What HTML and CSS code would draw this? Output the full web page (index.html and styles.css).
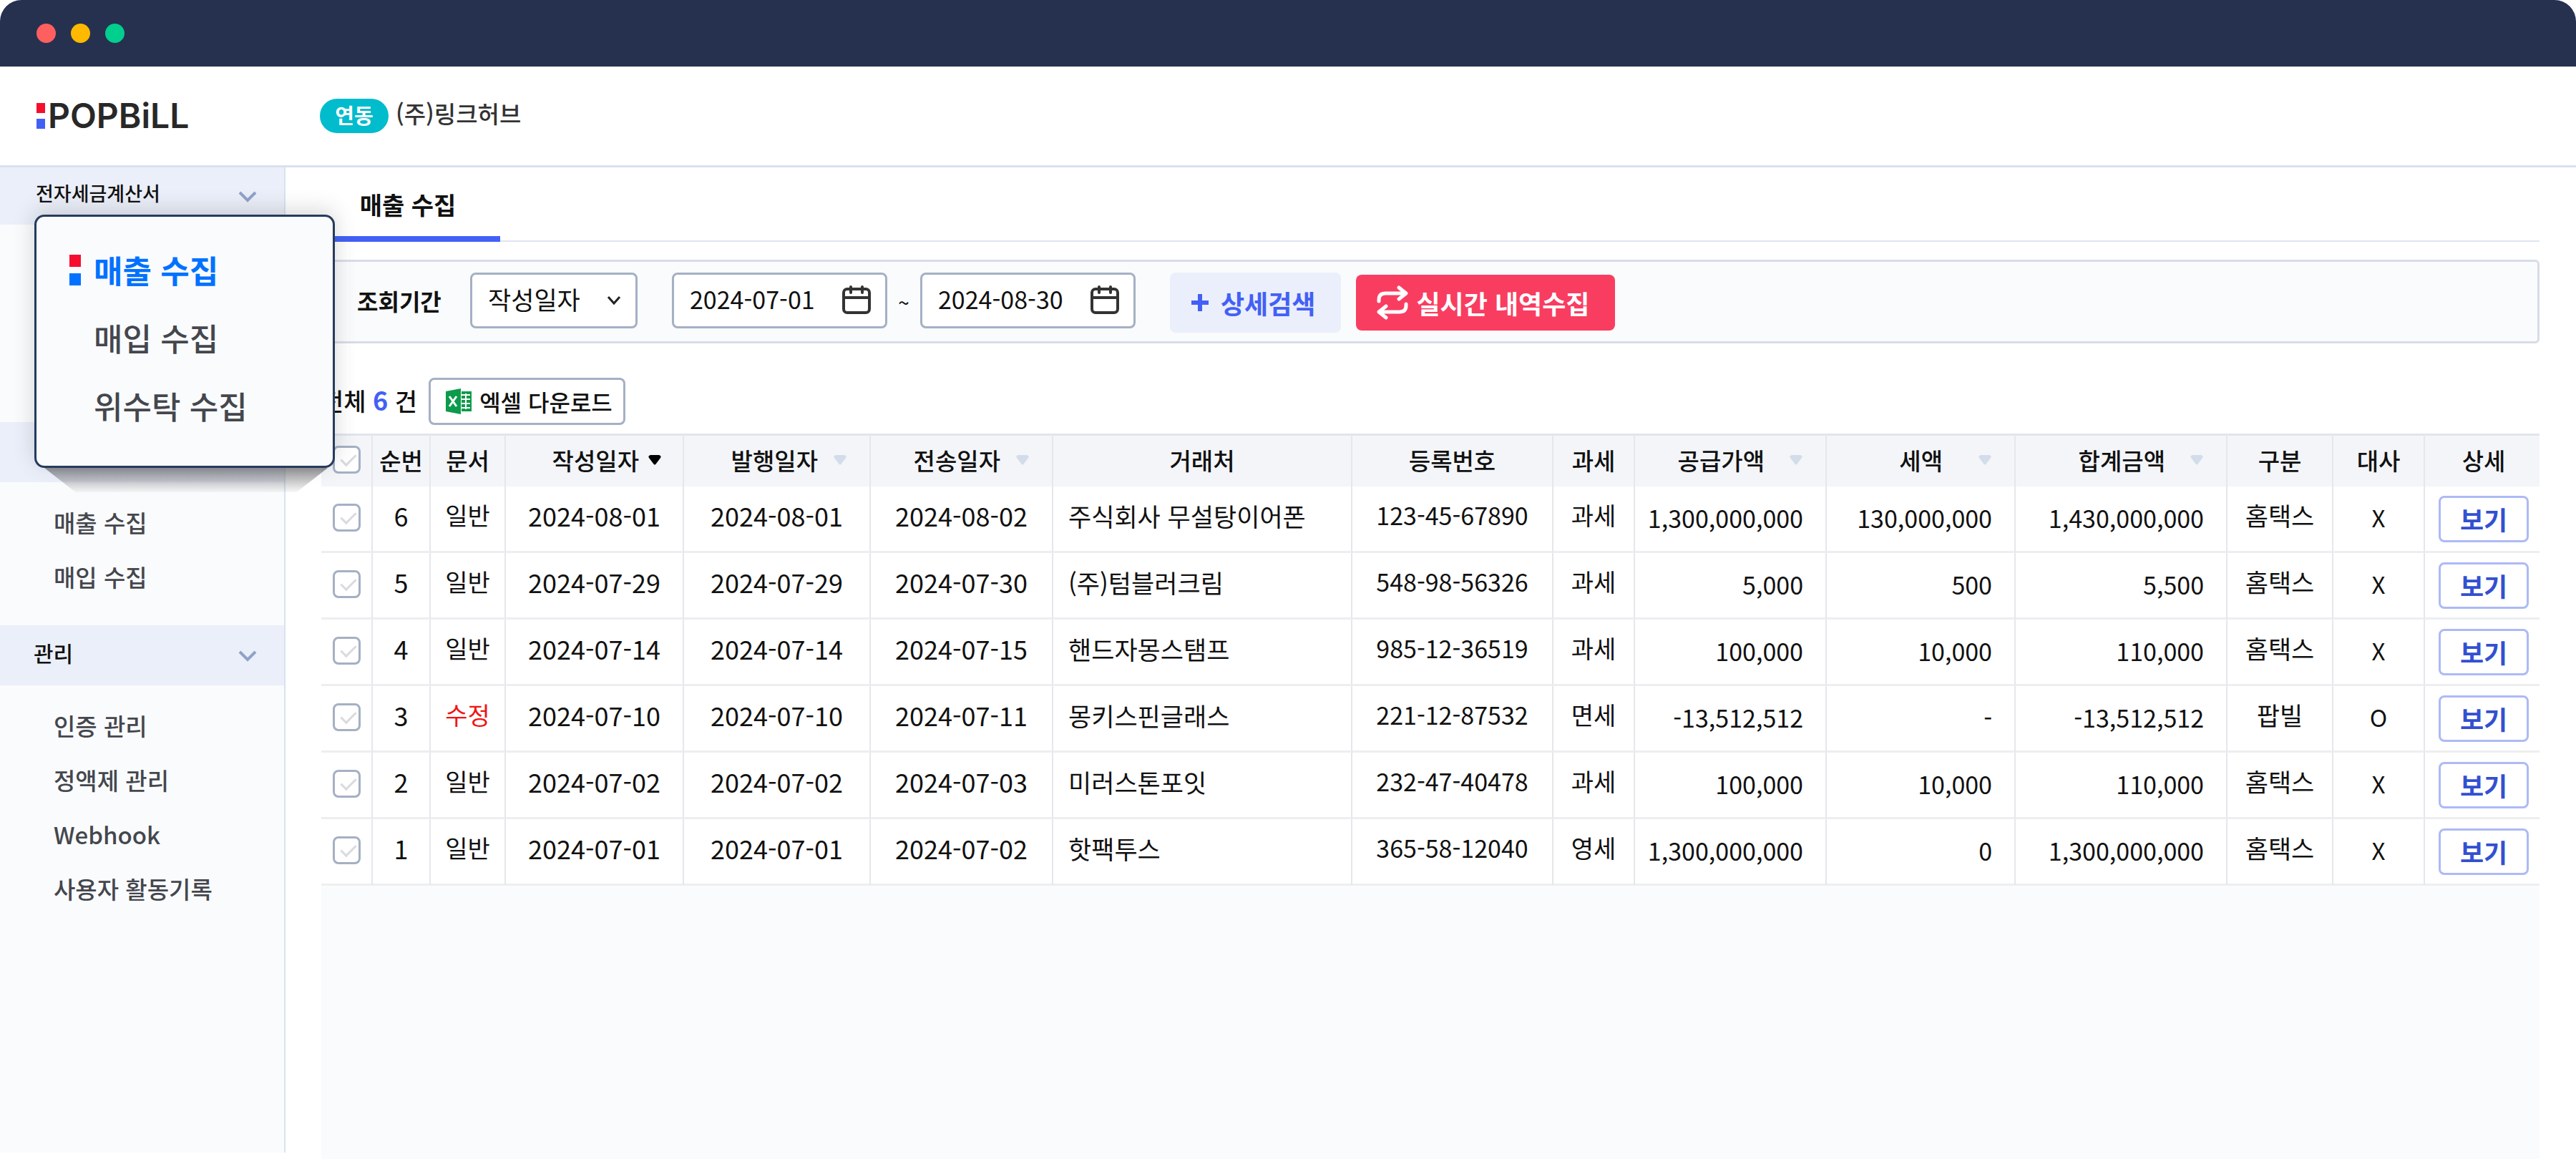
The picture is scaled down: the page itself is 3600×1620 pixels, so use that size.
FILE: index.html
```html
<!DOCTYPE html>
<html lang="ko">
<head>
	<meta charset="UTF-8">
	<title>POPBiLL - 매출 수집</title>
	<link rel="stylesheet" href="styles.css">
</head>
<body>
	<div class="window">
		<div class="titlebar">
			<span class="dot red"></span>
			<span class="dot yellow"></span>
			<span class="dot green"></span>
		</div>
		<header class="header">
			<a href="#" class="logo"><span class="mark"></span>POPBiLL</a>
			<span class="badge">연동</span>
			<span class="company">(주)링크허브</span>
		</header>
		<div class="body">
			<aside class="sidebar">
				<section class="nav-group">
					<h2 class="nav-title">전자세금계산서
						<svg class="arrow" viewBox="0 0 26 16"><path d="M2 2l11 11L24 2"/></svg>
					</h2>
					<ul class="nav-list nav-empty"></ul>
				</section>
				<section class="nav-group">
					<h2 class="nav-title"></h2>
					<ul class="nav-list">
						<li><a href="#">매출 수집</a></li>
						<li><a href="#">매입 수집</a></li>
					</ul>
				</section>
				<section class="nav-group">
					<h2 class="nav-title">관리
						<svg class="arrow" viewBox="0 0 26 16"><path d="M2 2l11 11L24 2"/></svg>
					</h2>
					<ul class="nav-list">
						<li><a href="#">인증 관리</a></li>
						<li><a href="#">정액제 관리</a></li>
						<li><a href="#">Webhook</a></li>
						<li><a href="#">사용자 활동기록</a></li>
					</ul>
				</section>
				<!-- 펼침 메뉴 -->
				<div class="popup">
					<ul class="popup-list">
						<li><a href="#" class="active"><span class="mark"></span>매출 수집</a></li>
						<li><a href="#">매입 수집</a></li>
						<li><a href="#">위수탁 수집</a></li>
					</ul>
				</div>
			</aside>
			<main class="main">
				<nav class="tabs"><a href="#" class="tab">매출 수집</a></nav>
				<form class="filter">
					<label class="filter-label" for="dateType">조회기간</label>
					<div class="field select-field">
						<select id="dateType"><option>작성일자</option></select>
						<svg class="caret" viewBox="0 0 20 14"><path d="M2 2l8 9 8-9"/></svg>
					</div>
					<div class="range">
						<label class="field date-field">
							<input type="text" value="2024-07-01" aria-label="시작일">
							<svg class="calendar" viewBox="0 0 40 40"><rect x="2" y="5" width="36" height="33" rx="5"/><path d="M2 17h36M12 2v8M28 2v8"/></svg>
						</label>
						<span class="tilde">~</span>
						<label class="field date-field">
							<input type="text" value="2024-08-30" aria-label="종료일">
							<svg class="calendar" viewBox="0 0 40 40"><rect x="2" y="5" width="36" height="33" rx="5"/><path d="M2 17h36M12 2v8M28 2v8"/></svg>
						</label>
					</div>
					<div class="actions">
						<button type="button" class="btn-detail">
							<svg class="plus" viewBox="0 0 24 24"><path d="M12 0v24M0 12h24"/></svg>상세검색
						</button>
						<button type="button" class="btn-collect">
							<svg class="repeat" viewBox="0 0 44 48"><path d="M3 22v-2q0-9 9-9h27M31 3l10 8-10 8M41 26v2q0 9-9 9H5M13 29L3 37l10 8"/></svg>실시간 내역수집
						</button>
					</div>
				</form>
				<div class="toolbar">
					<p class="total">전체 <b>6</b> 건</p>
					<button type="button" class="btn-excel">
						<svg class="excel" viewBox="0 0 36 36">
							<path fill="#0b9b4a" d="M0 4L21 0v36L0 32z"/>
							<path fill="#0b9b4a" d="M22 4h14v28H22z"/>
							<path stroke="#fff" stroke-width="2" d="M22 9h12M22 15h12M22 21h12M22 27h12M28 7v22"/>
							<path stroke="#fff" stroke-width="3" d="M5 11l10 14M15 11L5 25"/>
						</svg>엑셀 다운로드
					</button>
				</div>
				<div class="table-wrap">
					<table class="list">
						<colgroup>
							<col class="w-check"><col class="w-no"><col class="w-doc"><col class="w-date1"><col class="w-date2"><col class="w-date3">
							<col><col class="w-reg"><col class="w-tax"><col class="w-supply"><col class="w-vat"><col class="w-sum">
							<col class="w-kind"><col class="w-match"><col class="w-view">
						</colgroup>
						<thead>
							<tr>
								<th><input type="checkbox" class="check" aria-label="전체 선택"></th>
								<th>순번</th>
								<th>문서</th>
								<th><div class="sort on">작성일자<svg viewBox="0 0 18 14"><path d="M3 0h12q4 1 2 4l-6 8q-2 3-4 0L1 4Q-1 1 3 0z"/></svg></div></th>
								<th><div class="sort">발행일자<svg viewBox="0 0 18 14"><path d="M3 0h12q4 1 2 4l-6 8q-2 3-4 0L1 4Q-1 1 3 0z"/></svg></div></th>
								<th><div class="sort">전송일자<svg viewBox="0 0 18 14"><path d="M3 0h12q4 1 2 4l-6 8q-2 3-4 0L1 4Q-1 1 3 0z"/></svg></div></th>
								<th>거래처</th>
								<th>등록번호</th>
								<th>과세</th>
								<th><div class="sort wide">공급가액<svg viewBox="0 0 18 14"><path d="M3 0h12q4 1 2 4l-6 8q-2 3-4 0L1 4Q-1 1 3 0z"/></svg></div></th>
								<th><div class="sort wider">세액<svg viewBox="0 0 18 14"><path d="M3 0h12q4 1 2 4l-6 8q-2 3-4 0L1 4Q-1 1 3 0z"/></svg></div></th>
								<th><div class="sort wide">합계금액<svg viewBox="0 0 18 14"><path d="M3 0h12q4 1 2 4l-6 8q-2 3-4 0L1 4Q-1 1 3 0z"/></svg></div></th>
								<th>구분</th>
								<th>대사</th>
								<th>상세</th>
							</tr>
						</thead>
						<tbody>
							<tr>
								<td><input type="checkbox" class="check" aria-label="6번 선택"></td>
								<td class="date">6</td>
								<td>일반</td>
								<td class="date">2024-08-01</td>
								<td class="date">2024-08-01</td>
								<td class="date">2024-08-02</td>
								<td class="name">주식회사 무설탕이어폰</td>
								<td>123-45-67890</td>
								<td>과세</td>
								<td class="num">1,300,000,000</td>
								<td class="num">130,000,000</td>
								<td class="num">1,430,000,000</td>
								<td class="kind">홈택스</td>
								<td class="match">X</td>
								<td><button type="button" class="btn-view">보기</button></td>
							</tr>
							<tr>
								<td><input type="checkbox" class="check" aria-label="5번 선택"></td>
								<td class="date">5</td>
								<td>일반</td>
								<td class="date">2024-07-29</td>
								<td class="date">2024-07-29</td>
								<td class="date">2024-07-30</td>
								<td class="name">(주)텀블러크림</td>
								<td>548-98-56326</td>
								<td>과세</td>
								<td class="num">5,000</td>
								<td class="num">500</td>
								<td class="num">5,500</td>
								<td class="kind">홈택스</td>
								<td class="match">X</td>
								<td><button type="button" class="btn-view">보기</button></td>
							</tr>
							<tr>
								<td><input type="checkbox" class="check" aria-label="4번 선택"></td>
								<td class="date">4</td>
								<td>일반</td>
								<td class="date">2024-07-14</td>
								<td class="date">2024-07-14</td>
								<td class="date">2024-07-15</td>
								<td class="name">핸드자몽스탬프</td>
								<td>985-12-36519</td>
								<td>과세</td>
								<td class="num">100,000</td>
								<td class="num">10,000</td>
								<td class="num">110,000</td>
								<td class="kind">홈택스</td>
								<td class="match">X</td>
								<td><button type="button" class="btn-view">보기</button></td>
							</tr>
							<tr>
								<td><input type="checkbox" class="check" aria-label="3번 선택"></td>
								<td class="date">3</td>
								<td class="modified">수정</td>
								<td class="date">2024-07-10</td>
								<td class="date">2024-07-10</td>
								<td class="date">2024-07-11</td>
								<td class="name">몽키스핀글래스</td>
								<td>221-12-87532</td>
								<td>면세</td>
								<td class="num">-13,512,512</td>
								<td class="num">-</td>
								<td class="num">-13,512,512</td>
								<td class="kind">팝빌</td>
								<td class="match">O</td>
								<td><button type="button" class="btn-view">보기</button></td>
							</tr>
							<tr>
								<td><input type="checkbox" class="check" aria-label="2번 선택"></td>
								<td class="date">2</td>
								<td>일반</td>
								<td class="date">2024-07-02</td>
								<td class="date">2024-07-02</td>
								<td class="date">2024-07-03</td>
								<td class="name">미러스톤포잇</td>
								<td>232-47-40478</td>
								<td>과세</td>
								<td class="num">100,000</td>
								<td class="num">10,000</td>
								<td class="num">110,000</td>
								<td class="kind">홈택스</td>
								<td class="match">X</td>
								<td><button type="button" class="btn-view">보기</button></td>
							</tr>
							<tr>
								<td><input type="checkbox" class="check" aria-label="1번 선택"></td>
								<td class="date">1</td>
								<td>일반</td>
								<td class="date">2024-07-01</td>
								<td class="date">2024-07-01</td>
								<td class="date">2024-07-02</td>
								<td class="name">핫팩투스</td>
								<td>365-58-12040</td>
								<td>영세</td>
								<td class="num">1,300,000,000</td>
								<td class="num">0</td>
								<td class="num">1,300,000,000</td>
								<td class="kind">홈택스</td>
								<td class="match">X</td>
								<td><button type="button" class="btn-view">보기</button></td>
							</tr>
						</tbody>
					</table>
				</div>
			</main>
		</div>
	</div>
</body>
</html>
```

FILE: styles.css
```css
*{
	margin: 0;
	padding: 0;
	box-sizing: border-box;
}
body{
	background-color: #fff;
	color: #111;
	font-family: "Noto Sans CJK KR", sans-serif;
	font-size: 34px;
	line-height: 48px;
}
ul{
	list-style: none;
}
a{
	color: inherit;
	text-decoration: none;
}
button,input,select{
	font-family: inherit;
	font-size: inherit;
	line-height: inherit;
	color: inherit;
}
button{
	cursor: pointer;
}
svg{
	display: block;
	flex: none;
	fill: none;
}
.window{
	display: flex;
	flex-direction: column;
	min-height: 100vh;
}
/* 상단 */
.titlebar{
	display: flex;
	align-items: center;
	gap: 21px;
	height: 93px;
	padding-left: 51px;
	background-color: #26314f;
	border-radius: 30px 30px 0 0;
}
.dot{
	width: 27px;
	height: 27px;
	border-radius: 50%;
}
.red{
	background-color: #ff5f5f;
}
.yellow{
	background-color: #ffb900;
}
.green{
	background-color: #00cf8e;
}
.header{
	display: flex;
	align-items: center;
	height: 141px;
	padding-left: 51px;
	border-bottom: 3px solid #d8e0f0;
}
.logo{
	display: flex;
	align-items: center;
	gap: 4px;
	width: 396px;
	font-family: Inter, sans-serif;
	font-size: 48px;
	font-weight: 600;
	color: #282828;
}
.mark{
	display: flex;
	flex-direction: column;
	justify-content: space-between;
	width: 12px;
	height: 36px;
}
.mark::before,.mark::after{
	content: "";
	height: 40%;
	background-color: #f50f2d;
}
.mark::after{
	background-color: #4360f5;
}
.badge{
	width: 96px;
	margin-right: 10px;
	padding-bottom: 4px;
	border-radius: 24px;
	background-color: #00bccd;
	color: #fff;
	font-size: 29px;
	font-weight: 700;
	line-height: 44px;
	text-align: center;
}
.company{
	padding-bottom: 8px;
	font-size: 33px;
	font-weight: 500;
	color: #333;
}
.body{
	display: flex;
	flex: 1;
}
/* 왼쪽 메뉴 */
.sidebar{
	position: relative;
	flex: none;
	width: 399px;
	margin-bottom: 9px;
	background-color: #fafbfd;
	border-right: 2px solid #d8e2f2;
}
.nav-title{
	display: flex;
	align-items: center;
	justify-content: space-between;
	height: 84px;
	padding: 0 38px 8px 47px;
	background-color: #ebeff9;
	font-size: 30px;
	font-weight: 500;
}
.nav-group:first-child .nav-title{
	height: 80px;
	padding-left: 50px;
	font-size: 27px;
}
.arrow{
	width: 26px;
	height: 16px;
	margin-top: 10px;
	stroke: #8fa2c8;
	stroke-width: 4;
}
.nav-list{
	padding: 18px 0 30px 75px;
	font-size: 33px;
	font-weight: 500;
	line-height: 76px;
	color: #44474d;
}
.nav-empty{
	height: 276px;
}
.nav-list a{
	display: block;
}
.popup{
	position: absolute;
	top: 66px;
	left: 48px;
	z-index: 10;
	width: 420px;
}
.popup::before{
	content: "";
	position: absolute;
	left: 14px;
	right: 10px;
	top: 100%;
	height: 34px;
	background-image: linear-gradient(rgba(90,90,95,0.65), rgba(120,120,125,0.05));
	clip-path: polygon(0 0, 100% 0, 89% 100%, 11% 100%);
}
.popup-list{
	position: relative;
	padding: 27px 0 36px 80px;
	border: 3px solid #263b5e;
	border-radius: 14px;
	background-color: #fafbfd;
	box-shadow: 0 -6px 30px rgba(60,60,60,0.2);
	font-size: 44px;
	font-weight: 500;
	line-height: 95px;
	color: #44474d;
}
.popup-list a{
	display: flex;
	align-items: center;
}
.popup-list .active{
	color: #0072ff;
	font-weight: 700;
}
.popup .mark{
	width: 16px;
	height: 43px;
	margin-left: -34px;
	margin-right: 18px;
}
.popup .mark::after{
	background-color: #0072ff;
}
/* 본문 */
.main{
	display: flex;
	flex-direction: column;
	flex: 1;
	min-width: 0;
	padding: 0 51px 0 50px;
}
.tabs{
	display: flex;
	height: 104px;
	border-bottom: 2px solid #dfe5f3;
}
.tab{
	width: 250px;
	height: 104px;
	padding-right: 8px;
	border-bottom: 8px solid #4360f5;
	font-weight: 700;
	line-height: 104px;
	text-align: center;
}
.filter{
	display: flex;
	align-items: center;
	height: 117px;
	margin-top: 25px;
	padding: 0 0 3px 47px;
	border: 3px solid #d8dce6;
	border-radius: 6px;
	background-color: #f9fbfc;
}
.filter-label{
	width: 158px;
	font-size: 32px;
	font-weight: 700;
}
.field{
	display: flex;
	align-items: center;
	height: 78px;
	padding: 0 20px 4px 22px;
	border: 3px solid #a5b0c4;
	border-radius: 8px;
	background-color: #fff;
}
.field input,.field select{
	flex: 1;
	min-width: 0;
	border: 0;
	outline: 0;
	background: none;
	appearance: none;
}
.select-field{
	width: 234px;
	margin-right: 48px;
	font-size: 35px;
}
.caret{
	width: 20px;
	height: 14px;
	margin-top: 4px;
	stroke: #222;
	stroke-width: 3;
}
.range{
	display: flex;
	align-items: center;
	margin-right: 48px;
}
.date-field{
	width: 301px;
}
.calendar{
	width: 40px;
	height: 40px;
	margin-top: 2px;
	stroke: #333;
	stroke-width: 4;
	stroke-linecap: round;
}
.tilde{
	width: 46px;
	padding-top: 4px;
	font-size: 28px;
	text-align: center;
}
.actions{
	display: flex;
	align-items: center;
	gap: 21px;
	padding-top: 6px;
}
.btn-detail,.btn-collect{
	display: flex;
	align-items: center;
	border: 0;
	border-radius: 8px;
	font-size: 36px;
	font-weight: 700;
}
.btn-detail{
	gap: 17px;
	height: 84px;
	padding: 0 36px 0 30px;
	background-color: #eaeffb;
	color: #4360f5;
}
.plus{
	width: 24px;
	height: 24px;
	stroke: #4360f5;
	stroke-width: 6;
}
.btn-collect{
	gap: 11px;
	height: 78px;
	padding: 0 36px 0 29px;
	background-color: #f93d60;
	color: #fff;
}
.repeat{
	width: 44px;
	height: 48px;
	stroke: #fff;
	stroke-width: 5;
	stroke-linecap: round;
	stroke-linejoin: round;
}
.toolbar{
	display: flex;
	align-items: center;
	gap: 16px;
	margin-top: 48px;
	margin-bottom: 12px;
}
.total{
	padding-bottom: 4px;
	font-weight: 500;
}
.total b{
	font-size: 36px;
}
.total b{
	color: #4360f5;
}
.btn-excel{
	display: flex;
	align-items: center;
	gap: 11px;
	height: 66px;
	padding: 0 15px 0 21px;
	border: 3px solid #a5b0c4;
	border-radius: 8px;
	background-color: #fff;
	font-size: 32px;
	font-weight: 500;
}
.excel{
	width: 36px;
	height: 36px;
}
/* 목록 */
.table-wrap{
	flex: 1;
	background-color: #fafbfd;
}
.list{
	width: 100%;
	table-layout: fixed;
	border-collapse: separate;
	border-spacing: 0;
	background-color: #fff;
	text-align: center;
}
.w-check{ width: 72px; }
.w-no{ width: 81px; }
.w-doc{ width: 105px; }
.w-date1{ width: 249px; }
.w-date2{ width: 261px; }
.w-date3{ width: 255px; }
.w-reg{ width: 281px; }
.w-tax{ width: 114px; }
.w-supply{ width: 268px; }
.w-vat{ width: 264px; }
.w-sum{ width: 296px; }
.w-kind{ width: 148px; }
.w-match{ width: 128px; }
.w-view{ width: 160px; }
.list th{
	height: 74px;
	padding-bottom: 4px;
	border-top: 3px solid #e1e4eb;
	border-right: 2px solid #e5e7eb;
	background-color: #f3f5f9;
	font-size: 33px;
	font-weight: 500;
	white-space: nowrap;
}
.list td{
	height: 93px;
	padding-bottom: 10px;
	border-right: 2px solid #e5e7eb;
	border-bottom: 3px solid #edeef0;
	white-space: nowrap;
}
.list td:first-child{
	padding-bottom: 4px;
}
.list th:last-child,.list td:last-child{
	border-right: 0;
	padding-left: 4px;
}
.list td:last-child{
	padding-bottom: 0;
}
.list .date{
	font-size: 36px;
}
.list .name{
	padding-left: 21px;
	padding-bottom: 8px;
	font-size: 35px;
	text-align: left;
}
.list .num{
	padding-right: 31px;
	padding-bottom: 2px;
	text-align: right;
}
.list .kind{
	font-size: 35px;
}
.list .match{
	padding-bottom: 4px;
	font-size: 33px;
}
.list .modified{
	color: #f01414;
}
.sort{
	display: flex;
	align-items: center;
	justify-content: flex-end;
	gap: 22px;
	padding-right: 32px;
}
.sort.on{
	gap: 13px;
	padding-right: 30px;
}
.sort.wide{
	gap: 35px;
}
.sort.wider{
	gap: 50px;
}
.sort svg{
	width: 18px;
	height: 14px;
	fill: #d3dde9;
}
.sort.on svg{
	fill: #000;
}
.check{
	display: block;
	width: 39px;
	height: 39px;
	margin-left: 16px;
	border: 3px solid #a5b0c4;
	border-radius: 8px;
	background-color: #fff;
	appearance: none;
}
.check::before{
	content: "";
	display: block;
	width: 9px;
	height: 18px;
	margin: 4px 0 0 13px;
	border: solid #d9dbe0;
	border-width: 0 3px 3px 0;
	transform: rotate(45deg);
}
.btn-view{
	width: 126px;
	height: 65px;
	border: 3px solid #adbaf6;
	border-radius: 8px;
	background-color: #fff;
	color: #3350d0;
	font-size: 36px;
	font-weight: 700;
}
```
